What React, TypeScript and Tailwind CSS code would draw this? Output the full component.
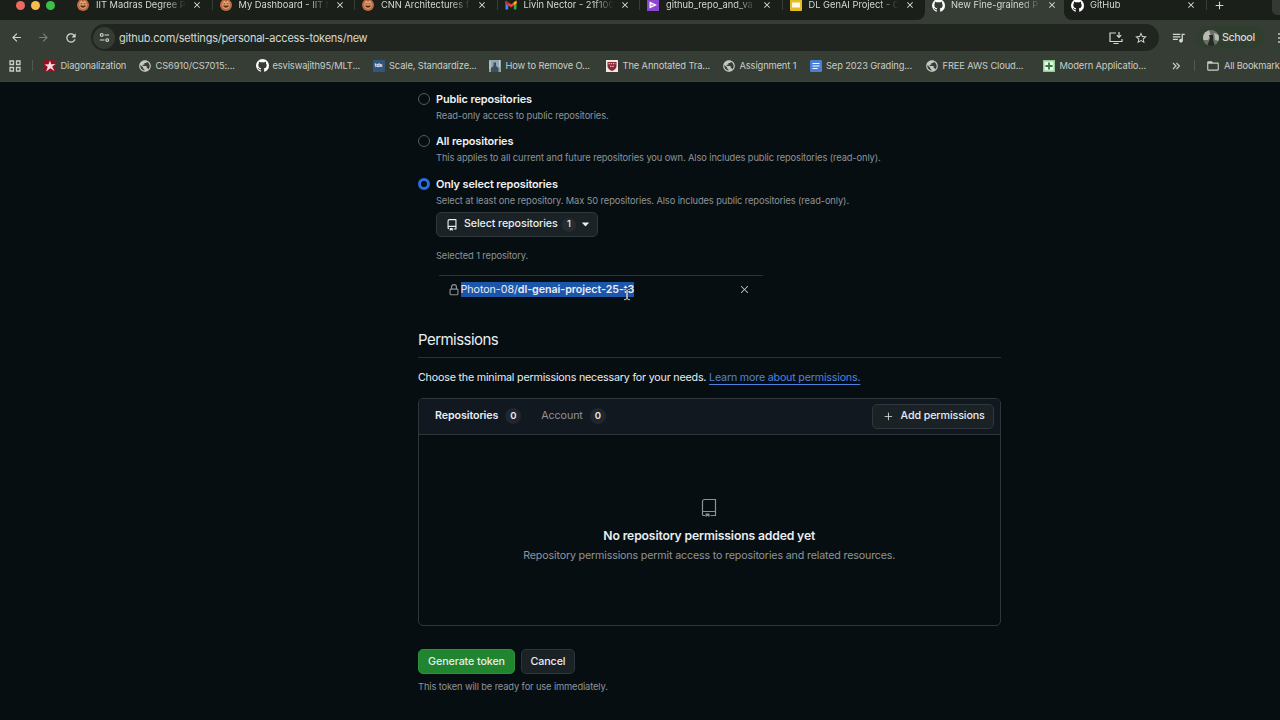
import React from 'react';
import { VscGithubInverted } from 'react-icons/vsc';
import { GoX, GoPlus, GoTriangleDown } from 'react-icons/go';
import {
  MdArrowBack,
  MdArrowForward,
  MdRefresh,
  MdPublic,
  MdStarOutline,
  MdOutlineQueueMusic,
  MdFolderOpen,
  MdClose,
  MdAdd,
} from 'react-icons/md';

const Github = () => <VscGithubInverted className="-m-[0.5px] size-[13px] text-white" />;
const Globe = () => <MdPublic className="-m-px size-[14px] text-[#c3c7c2]" />;

const RepoIcon = ({ className }: { className: string }) => (
  <svg viewBox="0 0 16 16" className={className} fill="currentColor">
    <path d="M2 2.5A2.5 2.5 0 0 1 4.5 0h8.75a.75.75 0 0 1 .75.75v12.5a.75.75 0 0 1-.75.75h-2.5a.75.75 0 0 1 0-1.5h1.75v-2h-8a1 1 0 0 0-.714 1.7.75.75 0 1 1-1.072 1.05A2.495 2.495 0 0 1 2 11.5Zm10.5-1h-8a1 1 0 0 0-1 1v6.708A2.486 2.486 0 0 1 4.5 9h8ZM5 12.25a.25.25 0 0 1 .25-.25h3.5a.25.25 0 0 1 .25.25v3.25a.25.25 0 0 1-.4.2l-1.45-1.087a.249.249 0 0 0-.3 0L5.4 15.7a.25.25 0 0 1-.4-.2Z" />
  </svg>
);

const EmptyRepoIcon = () => (
  <svg viewBox="0 0 20 20" className="size-5 text-[#8b9195]" fill="none" stroke="currentColor" strokeWidth="1.2">
    <path d="M6 17.500H4.500a1 1 0 0 1-1-1v-13a2 2 0 0 1 2-2h11v16h-5M3.500 13.500h13" />
    <path d="M6.500 15.500h4V19l-2-1.200L6.500 19z" fill="currentColor" stroke="none" />
  </svg>
);

const LockIcon = () => (
  <svg viewBox="0 0 16 16" className="mr-px -ml-px size-3 shrink-0 text-[#8b9195]" fill="currentColor">
    <path d="M4 4a4 4 0 0 1 8 0v2h.25c.966 0 1.750.784 1.750 1.750v5.500A1.750 1.750 0 0 1 12.250 15h-8.500A1.750 1.750 0 0 1 2 13.250v-5.500C2 6.784 2.784 6 3.750 6H4Zm8.250 3.500h-8.500a.25.25 0 0 0-.25.25v5.500c0 .138.112.25.25.25h8.500a.25.25 0 0 0 .25-.25v-5.500a.25.25 0 0 0-.25-.25ZM10.500 6V4a2.500 2.500 0 1 0-5 0v2Z" />
  </svg>
);

const IitIcon = () => (
  <svg viewBox="0 0 12 12" className="size-3">
    <circle cx="6" cy="6" r="6" fill="#c06b40" />
    <ellipse cx="6" cy="5.800" rx="3.600" ry="4" fill="#e3ad7c" />
    <path d="M3.500 4.800h1.800M6.700 4.800h1.800" stroke="#6a3320" strokeWidth="1" />
    <path d="M3 6.500c.8 3 5.200 3 6 0z" fill="#5a2c1c" />
    <path d="M6 .3v3" stroke="#a34a2c" strokeWidth="1" />
  </svg>
);

const GmailIcon = () => (
  <svg viewBox="0 0 12 12" className="size-3">
    <path d="M0.500 2.500v8h2.700V6" fill="#4285f4" />
    <path d="M11.500 2.500v8H8.800V6" fill="#34a853" />
    <path d="M0.500 2.700L6 7l5.500-4.300" stroke="#ea4335" strokeWidth="2.500" fill="none" />
    <path d="M8.800 3.500l2.700-2v2.800L8.800 6.300z" fill="#fbbc04" />
    <path d="M0.500 1.600l2.700 2v2.700L0.500 4.300z" fill="#c5221f" />
  </svg>
);

const ClipIcon = () => (
  <svg viewBox="0 0 12 12" className="size-3">
    <rect width="12" height="12" fill="#8d45cf" />
    <path d="M2.500 2.500l7.500 3.500-7.500 3.500z" fill="#fff" />
    <path d="M3.500 6h3" stroke="#8d45cf" strokeWidth="1" />
  </svg>
);

const SlidesIcon = () => (
  <svg viewBox="0 0 12 12" className="size-3">
    <rect width="12" height="12" rx="1" fill="#e5bd1f" />
    <rect x="2" y="3.500" width="8" height="5" fill="#fffbe6" />
  </svg>
);

const StarIcon = () => (
  <svg viewBox="0 0 12 12" className="size-3">
    <rect width="12" height="12" fill="#8c1526" />
    <path d="M6 0.500l1.200 3.800 4.300-.3-3.300 2.600L10.500 11 6.300 8.200 2.200 11.500l1.500-4.800L.5 4.500l4-.2z" fill="#f3dcdc" />
  </svg>
);

const TdsIcon = () => (
  <span className="flex size-3 items-center justify-center bg-[#31577f] text-[5px] font-bold text-white">tds</span>
);

const PersonIcon = () => (
  <svg viewBox="0 0 12 12" className="size-3">
    <rect width="12" height="12" fill="#90a6b1" />
    <path d="M2 12V8l2.500-2V2.500h2.500V6L9.500 8v4z" fill="#3d4f59" />
    <path d="M1 1v8M10.500 0v7" stroke="#c4d2d8" strokeWidth="1" />
  </svg>
);

const HarvardIcon = () => (
  <svg viewBox="0 0 12 12" className="size-3">
    <rect width="12" height="12" fill="#eee9e4" />
    <path d="M1.500 2h9v4c0 2.500-2 4-4.500 5C3.500 10 1.500 8.500 1.500 6z" fill="#8e2737" />
    <path d="M2.500 3.700h7M4 6.300h4" stroke="#e8cfd0" strokeWidth="1" strokeDasharray="1.500 .7" />
  </svg>
);

const DocsIcon = () => (
  <svg viewBox="0 0 12 12" className="size-3">
    <rect width="12" height="12" rx="1.200" fill="#4a7fd8" />
    <path d="M2.500 3.500h7M2.500 6h7M2.500 8.500h5" stroke="#fff" strokeWidth="1.200" />
  </svg>
);

const CrossIcon = () => (
  <svg viewBox="0 0 12 12" className="size-3">
    <rect width="12" height="12" fill="#8fcf95" />
    <rect x="1.500" y="1.500" width="9" height="9" fill="#eaf7ea" />
    <path d="M6 2.500v7M2.500 6h7" stroke="#2f7a3c" strokeWidth="1.800" />
  </svg>
);

const tabs = [
  { title: 'IIT Madras Degree P', icon: <IitIcon /> },
  { title: 'My Dashboard - IIT M', icon: <IitIcon /> },
  { title: 'CNN Architectures f', icon: <IitIcon /> },
  { title: 'Livin Nector - 21f100', icon: <GmailIcon /> },
  { title: 'github_repo_and_va', icon: <ClipIcon /> },
  { title: 'DL GenAI Project - C', icon: <SlidesIcon /> },
  { title: 'New Fine-grained P', icon: <Github />, active: true },
  { title: 'GitHub', icon: <Github /> },
];

const bookmarks = [
  { title: 'Diagonalization', icon: <StarIcon />, width: 'w-[95px]' },
  { title: 'CS6910/CS7015:...', icon: <Globe />, width: 'w-[117px]' },
  { title: 'esviswajith95/MLT...', icon: <Github />, width: 'w-[116.5px]' },
  { title: 'Scale, Standardize...', icon: <TdsIcon />, width: 'w-[116.5px]' },
  { title: 'How to Remove O...', icon: <PersonIcon />, width: 'w-[117px]' },
  { title: 'The Annotated Tra...', icon: <HarvardIcon />, width: 'w-[117px]' },
  { title: 'Assignment 1', icon: <Globe />, width: 'w-[86.5px]' },
  { title: 'Sep 2023 Grading...', icon: <DocsIcon />, width: 'w-[116.5px]' },
  { title: 'FREE AWS Cloud...', icon: <Globe />, width: 'w-[117px]' },
  { title: 'Modern Applicatio...', icon: <CrossIcon />, width: 'w-[128px]' },
];

const tabShape = (i: number) => {
  if (i === 5) return 'h-5 rounded-br-[8px] bg-[#1a1f19]';
  if (i === 7) return 'h-5 rounded-bl-[8px] bg-[#1a1f19]';
  return 'h-5';
};

const TabStrip = () => (
  <div className="flex h-5 bg-[#1a1f19]">
    <div className="flex h-[10px] w-[70px] shrink-0 items-center gap-[6px] pl-4">
      <span className="size-[9px] rounded-full bg-[#ee6a5f]" />
      <span className="size-[9px] rounded-full bg-[#f5bd4f]" />
      <span className="size-[9px] rounded-full bg-[#38c24a]" />
    </div>
    {tabs.map((tab, i) => (
      <div
        key={i}
        className={tab.active ? 'w-[139px] shrink-0 bg-[#363d35]' : i === 5 || i === 7 ? 'w-[142.5px] shrink-0 bg-[#363d35]' : 'w-[142.5px] shrink-0'}
      >
        <div className={tabShape(i)}>
          <div className="flex h-[10px] items-center pl-[7px]">
            <span className="flex size-3 shrink-0 items-center justify-center">{tab.icon}</span>
            <span className="ml-[7px] w-[94px] text-[9.3px] leading-[10px] whitespace-nowrap text-[#d5d9d3] [mask-image:linear-gradient(to_right,black_70px,transparent_90px)]">
              {tab.title}
            </span>
            <MdClose className="ml-[2px] size-[10px] shrink-0 text-[#e4e7e2]" />
            {i !== 5 && i !== 6 && <span className="ml-auto h-[10px] w-px shrink-0 bg-[#373e36]" />}
          </div>
        </div>
      </div>
    ))}
    <MdAdd className="-mt-[1.5px] ml-[6px] size-[13px] shrink-0" />
    <span className="mr-0 ml-auto h-[15px] w-2 rounded-bl-[5px] bg-[#343a33]" />
  </div>
);

const Toolbar = () => (
  <div className="flex h-[35px] items-center text-[#d5d9d3]">
    <MdArrowBack className="ml-[10px] size-[13px]" />
    <MdArrowForward className="ml-[14px] size-[13px] text-[#7b817a]" />
    <MdRefresh className="ml-[14px] size-[14px]" />
    <div className="ml-[13px] flex h-[27px] w-[1068px] shrink-0 items-center rounded-full bg-[#20261f]">
      <span className="ml-[2px] flex size-[22px] items-center justify-center rounded-full bg-[#353c34]">
        <svg viewBox="0 0 12 12" className="size-[11px]" fill="none" stroke="currentColor" strokeWidth="1.200">
          <circle cx="3" cy="3.200" r="1.500" />
          <path d="M6 3.200h5M1 8.800h5" />
          <circle cx="9" cy="8.800" r="1.500" />
        </svg>
      </span>
      <span className="mt-px ml-1 flex-1 text-[11px] tracking-[-0.24px]">github.com/settings/personal-access-tokens/new</span>
      <svg viewBox="0 0 14 14" className="size-[14px]" fill="none" stroke="currentColor" strokeWidth="1.200">
        <path d="M7 2H1v8.500h12V8M4.500 12.500h5M10 1v5M7.800 4.200L10 6.400l2.200-2.200" />
      </svg>
      <MdStarOutline className="mr-[11px] ml-[11px] size-[14px]" />
    </div>
    <MdOutlineQueueMusic className="ml-[12px] size-[15px] shrink-0" />
    <div className="ml-[10px] flex h-[23px] w-[68px] shrink-0 items-center rounded-full bg-[#303e2f] pl-[7px] text-[10.7px] tracking-[-0.4px]">
      <svg viewBox="0 0 16 16" className="mr-[3px] size-4 rounded-full">
        <rect width="16" height="16" fill="#6c6f68" />
        <path d="M0 3l6-3 2 6-3 4H0zM11 3l5 2v6l-4-1z" fill="#b9bab2" />
        <path d="M6 5h4v5l2 6H4l3-7z" fill="#252a26" />
      </svg>
      <span className="mt-px font-medium">School</span>
    </div>
    <span className="ml-auto flex w-[2px] flex-col gap-[2px] overflow-hidden">
      <i className="size-[2px] rounded-full bg-[#c3c7c2]" />
      <i className="size-[2px] rounded-full bg-[#c3c7c2]" />
      <i className="size-[2px] rounded-full bg-[#c3c7c2]" />
    </span>
  </div>
);

const BookmarkBar = () => (
  <div className="flex h-[21px] items-center text-[9.3px] tracking-[-0.11px] whitespace-nowrap text-[#c9cdc7]">
    <svg viewBox="0 0 12 12" className="ml-[9px] size-3 shrink-0" fill="none" stroke="currentColor" strokeWidth="1.300">
      <path d="M1 1h3.500v3.500H1zM7.500 1H11v3.500H7.500zM1 7.500h3.500V11H1zM7.500 7.500H11V11H7.500z" />
    </svg>
    <span className="mr-[11px] ml-[11px] h-[11px] w-px shrink-0 bg-[#50584f]" />
    {bookmarks.map((b) => (
      <div key={b.title} className={`flex shrink-0 items-center gap-[4.5px] ${b.width}`}>
        {b.icon}
        <span className="mt-px">{b.title}</span>
      </div>
    ))}
    <svg viewBox="0 0 8 8" className="mr-[14px] ml-px size-2 shrink-0" fill="none" stroke="currentColor" strokeWidth="1.200">
      <path d="M1 1l3 3-3 3M4.500 1l3 3-3 3" />
    </svg>
    <span className="mr-[11px] h-[11px] w-px shrink-0 bg-[#50584f]" />
    <MdFolderOpen className="mr-[4px] size-[14px] shrink-0" />
    <span className="mt-px tracking-[-0.2px]">All Bookmark</span>
  </div>
);

type RadioProps = { title: string; note: string; checked?: boolean };

const RadioRow: React.FC<RadioProps> = ({ title, note, checked }) => (
  <div className="flex h-[42.500px] gap-[6px]">
    <span
      className={
        checked
          ? 'mt-[2px] size-3 rounded-full border-[3.5px] border-[#2a6de0] bg-[#070e12]'
          : 'mt-[2px] size-3 rounded-full border border-[#565c62]'
      }
    />
    <div>
      <div className="text-[10.9px] leading-4 font-semibold tracking-[-0.12px] text-[#eff2f4]">{title}</div>
      <div className="mt-px text-[9.3px] leading-4 tracking-[-0.1px] text-[#8e9498]">{note}</div>
    </div>
  </div>
);

const Counter = () => (
  <span className="ml-[7px] flex size-4 items-center justify-center rounded-full bg-[#1f262c] pt-px text-[9.5px] font-semibold">
    0
  </span>
);

const Page = () => (
  <main className="w-[582.5px] pt-[8.5px] text-[10.7px] tracking-[-0.1px] text-[#e9edf0]">
    <RadioRow title="Public repositories" note="Read-only access to public repositories." />
    <RadioRow
      title="All repositories"
      note="This applies to all current and future repositories you own. Also includes public repositories (read-only)."
    />
    <RadioRow
      title="Only select repositories"
      note="Select at least one repository. Max 50 repositories. Also includes public repositories (read-only)."
      checked
    />
    <div className="-mt-[6px] ml-[18px]">
      <button className="flex h-[25px] w-[162px] items-center rounded-[5px] border border-[#30373c] bg-[#1b2226] pl-[9px] font-medium whitespace-nowrap">
        <RepoIcon className="mr-[6px] size-3" />
        <span className="w-[94px] text-left tracking-[-0.1px]">Select repositories</span>
        <span className="ml-[4px] flex size-[14px] items-center justify-center rounded-full bg-[#242e31] text-[9.5px]">1</span>
        <GoTriangleDown className="ml-[3px] size-[13px]" />
      </button>
      <p className="mt-[11px] text-[9.3px] leading-4 text-[#8e9498]">Selected 1 repository.</p>
      <div className="mt-[10.5px] ml-[3px] flex h-[29px] w-[324px] items-center border-t border-[#2b3136] pl-[9.5px]">
        <LockIcon />
        <span className="relative bg-[#1d55ab] leading-[15px] tracking-[-0.05px] whitespace-nowrap">
          Photon-08/<b className="font-semibold">dl-genai-project-25-t3</b>
          <svg viewBox="0 0 8 14" className="absolute top-[6px] right-[3px] h-[13px] w-2" fill="none" stroke="#e8e8e8">
            <path d="M1 1.500c2 0 3 .5 3 2v7c0 1.500-1 2-3 2M7 1.500c-2 0-3 .5-3 2v7c0 1.500 1 2 3 2" stroke="#222" strokeWidth="2.200" />
            <path d="M1 1.500c2 0 3 .5 3 2v7c0 1.500-1 2-3 2M7 1.500c-2 0-3 .5-3 2v7c0 1.500 1 2 3 2" />
          </svg>
        </span>
        <GoX className="mr-3 ml-auto size-[13px] text-[#c3c8cc]" />
      </div>
    </div>
    <h2 className="mt-[24px] h-[30px] border-b border-[#2b3136] text-[15px] leading-[23px] tracking-[-0.55px]">Permissions</h2>
    <p className="mt-[12.5px] leading-4 tracking-[-0.19px]">
      Choose the minimal permissions necessary for your needs.{' '}
      <a className="text-[#4f82dc] underline underline-offset-[3px]">Learn more about permissions.</a>
    </p>
    <section className="mt-[11.5px] h-[228px] rounded-[5px] border border-[#30363b]">
      <div className="flex h-9 items-center rounded-t-[4px] border-b border-[#30363b] bg-[#11181f] pr-[5.5px] pl-[16px]">
        <b className="pt-px font-semibold">Repositories</b>
        <Counter />
        <span className="ml-5 pt-px text-[#8e9498]">Account</span>
        <Counter />
        <button className="ml-auto flex h-[25px] w-[122px] items-center rounded-[5px] border border-[#30373c] bg-[#1b2226] pl-[8.5px] font-medium">
          <GoPlus className="mr-[6px] size-[13px]" />
          <span className="pt-px">Add permissions</span>
        </button>
      </div>
      <div className="flex flex-col items-center pt-[63px]">
        <EmptyRepoIcon />
        <div className="mt-[8.5px] text-[12.200px] leading-5 font-semibold tracking-[-0.15px]">
          No repository permissions added yet
        </div>
        <div className="leading-[19px] tracking-[-0.16px] text-[#8e9498]">
          Repository permissions permit access to repositories and related resources.
        </div>
      </div>
    </section>
    <div className="mt-[23.5px] flex gap-[6px] font-medium">
      <button className="h-[25px] w-[97px] rounded-[5px] border border-[#2f9043] bg-[#21842f] pt-px">Generate token</button>
      <button className="h-[25px] w-[54px] rounded-[5px] border border-[#30373c] bg-[#1b2226] pt-px">Cancel</button>
    </div>
    <p className="mt-[5px] text-[9.3px] leading-4 tracking-[-0.12px] text-[#8e9498]">This token will be ready for use immediately.</p>
  </main>
);

const App: React.FC = () => (
  <div className="h-[720px] w-[1280px] overflow-hidden bg-[#070e12] font-[Inter,sans-serif]">
    <header className="h-[82px] overflow-hidden border-b border-[#3a4347] bg-[#363d35] text-[#d5d9d3]">
      <TabStrip />
      <Toolbar />
      <BookmarkBar />
    </header>
    <div className="pl-[418px]">
      <Page />
    </div>
  </div>
);

export default App;
